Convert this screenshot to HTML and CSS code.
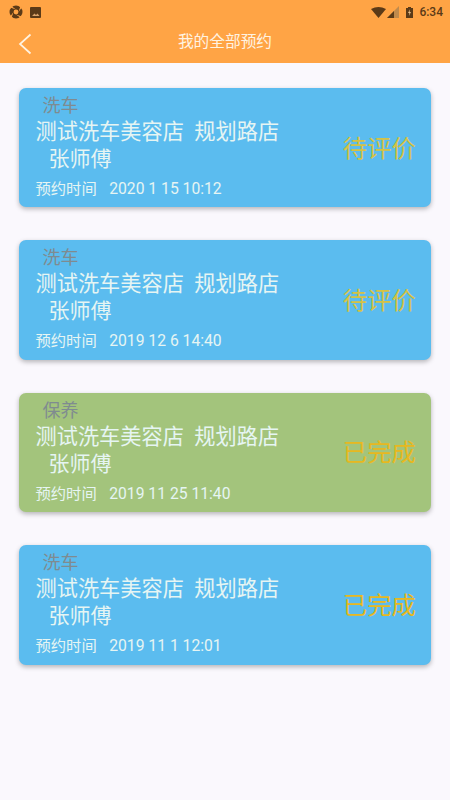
FILE: index.html
```html
<!DOCTYPE html>
<html lang="zh">
<head>
<meta charset="utf-8">
<title>我的全部预约</title>
<link rel="stylesheet" href="styles.css">
</head>
<body>
<header class="header">
  <div class="statusbar">
    <div class="status-left">
      <svg class="ico" width="14" height="14" viewBox="0 0 14 14"><circle cx="7" cy="7" r="6.5" fill="#5b3a17"/><path d="M7 4.5 L2.6 1.2 L1.2 2.6Z M9.5 7 L12.8 2.6 L11.4 1.2Z M7 9.5 L11.4 12.8 L12.8 11.4Z M4.5 7 L1.2 11.4 L2.6 12.8Z" fill="#ffa445"/><circle cx="7" cy="7" r="2.4" fill="#ffa445"/></svg>
      <svg class="ico" width="13" height="13" viewBox="0 0 13 13"><rect x="1" y="1" width="11" height="11" rx="1" fill="#5b3a17"/><path d="M3 10 L5.5 7.5 L7 9 L8.5 7.5 L10.5 10Z" fill="#d9a36a"/></svg>
    </div>
    <div class="status-right">
      <svg class="wifi" width="15" height="11" viewBox="0 0 15 11"><path d="M0 2 Q7.5 -2 15 2 L7.5 11Z" fill="#5b3a17"/></svg>
      <svg class="signal" width="12" height="12" viewBox="0 0 12 12"><path d="M12 0 V12 H0Z" fill="#c08a4c"/><path d="M7 5 V12 H0Z" fill="#5b3a17"/></svg>
      <svg class="battery" width="7" height="11" viewBox="0 0 7 11"><path d="M2 0 H5 V1 H7 V11 H0 V1 H2Z" fill="#5b3a17"/><path d="M4 2.2 L2 6 H3.4 L2.9 9 L5 5 H3.6Z" fill="#e9c08c"/></svg>
      <span class="clock">6:34</span>
    </div>
  </div>
  <div class="navbar">
    <svg class="back" width="14" height="22" viewBox="0 0 14 22"><path d="M12.5 1.5 L2 11 L12.5 20.5" fill="none" stroke="#fff3e2" stroke-width="1.7"/></svg>
    <h1 class="title">我的全部预约</h1>
  </div>
</header>
<main class="list">
  <article class="card blue">
    <div class="info">
      <div class="tag">洗车</div>
      <div class="shop">测试洗车美容店&nbsp;&nbsp;规划路店</div>
      <div class="worker">张师傅</div>
      <div class="time"><span>预约时间</span><span class="date">2020 1 15 10:12</span></div>
    </div>
    <div class="state">待评价</div>
  </article>
  <article class="card blue">
    <div class="info">
      <div class="tag">洗车</div>
      <div class="shop">测试洗车美容店&nbsp;&nbsp;规划路店</div>
      <div class="worker">张师傅</div>
      <div class="time"><span>预约时间</span><span class="date">2019 12 6 14:40</span></div>
    </div>
    <div class="state">待评价</div>
  </article>
  <article class="card green">
    <div class="info">
      <div class="tag">保养</div>
      <div class="shop">测试洗车美容店&nbsp;&nbsp;规划路店</div>
      <div class="worker">张师傅</div>
      <div class="time"><span>预约时间</span><span class="date">2019 11 25 11:40</span></div>
    </div>
    <div class="state done">已完成</div>
  </article>
  <article class="card blue">
    <div class="info">
      <div class="tag">洗车</div>
      <div class="shop">测试洗车美容店&nbsp;&nbsp;规划路店</div>
      <div class="worker">张师傅</div>
      <div class="time"><span>预约时间</span><span class="date">2019 11 1 12:01</span></div>
    </div>
    <div class="state done">已完成</div>
  </article>
</main>
</body>
</html>
```
FILE: styles.css
```css
* { box-sizing: border-box; }
html, body { margin: 0; height: 100%; }
body {
  width: 450px;
  height: 800px;
  overflow: hidden;
  background: #faf8fd;
  font-family: Roboto, "Noto Sans CJK SC", sans-serif;
}
.header { background: #ffa445; height: 63px; }
.statusbar {
  height: 24px;
  padding: 0 7px 0 9px;
  display: flex;
  justify-content: space-between;
  align-items: center;
}
.status-left { display: flex; align-items: center; gap: 6px; }
.status-right { display: flex; align-items: center; }
.ico, .status-right svg { display: block; }
.signal { margin-left: 1px; }
.battery { margin: 0 6px 0 7px; }
.clock { font-size: 12px; color: #5b3a17; font-weight: 500; }
.navbar {
  height: 39px;
  display: flex;
  align-items: center;
  padding-left: 18px;
  position: relative;
}
.back { display: block; }
.title {
  position: absolute;
  left: 0;
  right: 0;
  top: 8px;
  margin: 0;
  text-align: center;
  font-size: 15.7px;
  line-height: 19px;
  font-weight: 400;
  color: #fff3e2;
}
.list {
  padding: 25px 19px 0;
  display: flex;
  flex-direction: column;
  gap: 33px;
}
.card {
  height: 119.4px;
  border-radius: 7px;
  box-shadow: 0 2px 5px rgba(0, 0, 0, 0.28);
  display: flex;
  justify-content: space-between;
  align-items: center;
  padding: 0 15px 0 16.5px;
}
.blue { background: #5bbcef; }
.green { background: #a3c47c; }
.info {
  display: flex;
  flex-direction: column;
  align-self: flex-start;
  padding-top: 6px;
  color: #e6f5f3;
}
.tag {
  font-size: 18px;
  line-height: 24px;
  padding-left: 7px;
  color: #7f8b90;
}
.shop { font-size: 21.2px; line-height: 27px; }
.worker { font-size: 21px; line-height: 29px; padding-left: 13px; }
.time {
  display: flex;
  align-items: baseline;
  gap: 12.5px;
  font-size: 15.3px;
  line-height: 20px;
  margin-top: 5px;
}
.date { font-size: 15.7px; }
.state {
  font-size: 24.4px;
  line-height: 30px;
  color: #d4c244;
  margin-top: 2px;
}
.state.done { color: #e7b820; }
```
